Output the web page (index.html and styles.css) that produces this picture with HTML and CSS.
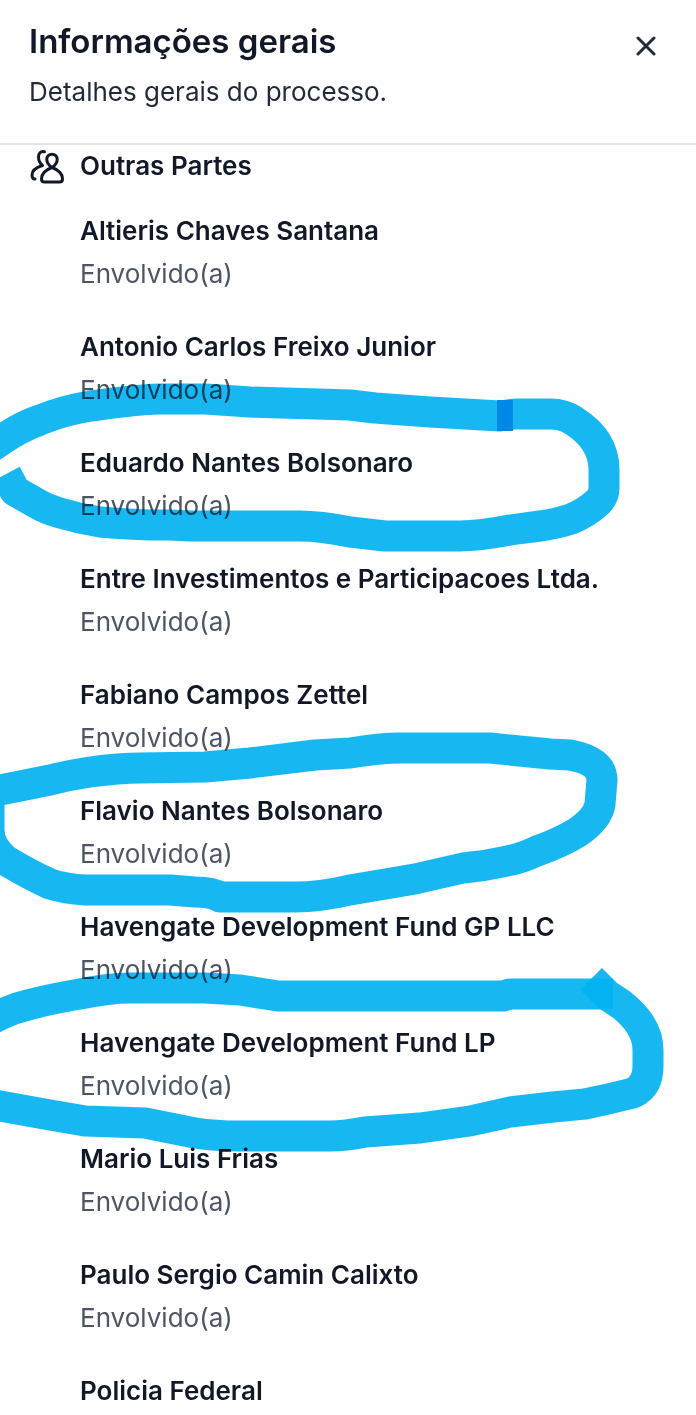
FILE: index.html
```html
<!DOCTYPE html>
<html lang="pt-BR">
<head>
  <meta charset="utf-8">
  <meta name="viewport" content="width=device-width, initial-scale=1">
  <title>Informações gerais</title>
  <link rel="stylesheet" href="styles.css">
</head>

<body>
  <header class="header">
    <div class="heading">
      <h1>Informações gerais</h1>
      <p>Detalhes gerais do processo.</p>
    </div>
    <button class="close" type="button" aria-label="Fechar">
      <svg width="20" height="20" viewBox="0 0 20 20"><path d="M2 2L18 18M18 2L2 18"/></svg>
    </button>
  </header>

  <main class="content">
    <div class="section-title">
      <svg class="people" width="36" height="36" viewBox="0 0 36 36">
        <path d="M22 19.500C19 17.500 16.800 14.500 16.800 11.500C16.800 8.300 19 6.300 22 6.300C25 6.300 27.200 8.300 27.200 11.500C27.200 14.500 25 17.500 22 19.500C15 22 11.500 25.500 11.500 31C11.500 33 12.500 34 14.500 34H29.500C31.500 34 32.500 33 32.500 31C32.500 25.500 29 22 22 19.500"/>
        <path d="M14.500 3.800C10.500 2.800 8.500 5.800 8.500 9C8.500 12.500 10 15.500 12.500 17.500C6 19.500 2 22.500 2 27C2 29.500 3.200 31 5 31"/>
      </svg>
      <h2>Outras Partes</h2>
    </div>

    <ul class="parties">
      <li><strong>Altieris Chaves Santana</strong><span>Envolvido(a)</span></li>
      <li><strong>Antonio Carlos Freixo Junior</strong><span>Envolvido(a)</span></li>
      <li><strong>Eduardo Nantes Bolsonaro</strong><span>Envolvido(a)</span></li>
      <li><strong>Entre Investimentos e Participacoes Ltda.</strong><span>Envolvido(a)</span></li>
      <li><strong>Fabiano Campos Zettel</strong><span>Envolvido(a)</span></li>
      <li><strong>Flavio Nantes Bolsonaro</strong><span>Envolvido(a)</span></li>
      <li><strong>Havengate Development Fund GP LLC</strong><span>Envolvido(a)</span></li>
      <li><strong>Havengate Development Fund LP</strong><span>Envolvido(a)</span></li>
      <li><strong>Mario Luis Frias</strong><span>Envolvido(a)</span></li>
      <li><strong>Paulo Sergio Camin Calixto</strong><span>Envolvido(a)</span></li>
      <li><strong>Policia Federal</strong></li>
    </ul>
  </main>

  <!-- highlighter marks -->
  <svg class="marker" width="696" height="1415" viewBox="0 0 696 1415" aria-hidden="true">
    <path d="M-12 449L0 441Q20 427 40 420Q62 411 85 407Q130 400 160 399L205 399L250 402L350 405L375 408L430 412L500 416L515 414H550Q564 414 574 421Q604 440 604 470V488Q604 496 598 502Q586 513 571 519Q556 524 540 526L510 530Q480 536 460 536H385L350 532Q320 526 300 526H190L170 525Q130 525 100 522Q80 519 60 513Q46 509 36 503L15 491L6 474"/>
    <path d="M-12 793L0 790L50 780Q70 775 90 772Q120 768 140 768L205 767L250 763L315 755L350 753Q380 748 400 748H490L550 754L570 755Q602 761 602 780L600 804Q598 818 578 832Q560 843 537 851Q520 859 507 861Q485 866 463 868L415 879L350 890Q320 897 295 897H220Q212 892 195 892L170 890H85Q66 889 50 884Q30 875 5 860Q-11 846 -11 830V786"/>
    <path d="M-12 1021L0 1015Q14 1008 28 1005Q50 999 80 994Q110 988 130 988H205L240 990L278 996H503L510 994H613"/>
    <path d="M591 979L607 995L622 1005Q648 1026 648 1050V1066Q648 1086 633 1093L608 1099L585 1104L553 1107L510 1112L470 1121L420 1128L365 1132Q345 1136 330 1136H240Q215 1136 195 1133L145 1123L85 1121L50 1115L0 1106L-12 1104"/>
    <path class="patch" d="M497 400H513V431H497Z"/>
  </svg>
</body>
</html>
```
FILE: styles.css
```css
* {box-sizing: border-box;}

body {
  position: relative;
  margin: 0;
  background: #fefefe;
  color: #111827;
  font-family: Inter, "Liberation Sans", sans-serif;
  font-size: 26px;
  line-height: 40px;
  overflow-x: hidden;
}

h1, h2, p, ul {margin: 0; padding: 0;}
h1 {font-size: 33px; line-height: 42px; font-weight: 600;}
h2 {font-size: 26px; font-weight: 600;}

.header {
  display: flex;
  justify-content: space-between;
  align-items: flex-start;
  padding: 20px 30px 31px 29px;
  border-bottom: 2px solid #e1e3e5;
}
.heading p {margin-top: 10px; color: #1f2937;}

.close {
  display: flex;
  margin-top: 6px;
  padding: 10px;
  border: 0;
  background: none;
}
.close svg {fill: none; stroke: #1f2937; stroke-width: 3; stroke-linecap: round;}

.content {padding: 1px 30px 0;}
.section-title {display: flex; align-items: center; gap: 14px;}
.people {fill: none; stroke: #111827; stroke-width: 3; stroke-linecap: round; stroke-linejoin: round;}

.parties {
  display: flex;
  flex-direction: column;
  gap: 33px;
  margin-top: 25px;
  padding-left: 50px;
  list-style: none;
}
.parties li {display: flex; flex-direction: column; gap: 3px;}
.parties strong {font-weight: 600;}
.parties span {color: #4b5563;}

.marker {
  position: absolute;
  top: 0;
  left: 0;
  fill: none;
  stroke: #00b2f2;
  stroke-opacity: 0.91;
  stroke-width: 31;
  stroke-linejoin: round;
  mix-blend-mode: multiply;
  pointer-events: none;
}
.marker .patch {fill: #0089ea; stroke: none;}
```
